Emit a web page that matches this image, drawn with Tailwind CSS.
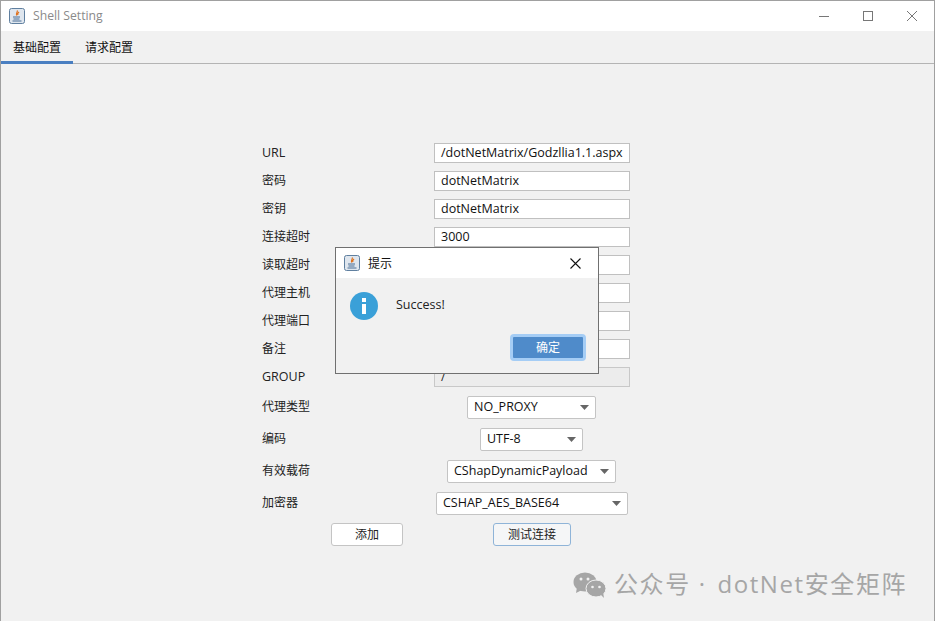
<!DOCTYPE html>
<html><head><meta charset="utf-8"><script src="https://cdn.jsdelivr.net/npm/@tailwindcss/browser@4"></script></head>
<body class="m-0">
<div class="relative w-[935px] h-[621px] overflow-hidden bg-[#f1f1f1] border border-[#a0a0a0] border-b-0 text-[12px] text-[#111] font-['Open_Sans','Noto_Sans_CJK_SC',sans-serif]">
  <!-- title bar -->
  <div class="h-[30px] bg-white flex items-center">
    <svg class="ml-[8px] w-[16px] h-[16px]" viewBox="0 0 16 16"><rect x=".5" y=".5" width="15" height="15" rx="2" fill="#dfe6ee" stroke="#5f7f9f"/><path d="M8 2.5c1.5 1.5-2 3 0 5M10 4c-1 1-2 1.500-1 3" stroke="#e0701a" fill="none" stroke-width="1.200"/><path d="M4 9h7M4.500 11h6M3.500 13h9" stroke="#4a6f96" stroke-width="1"/></svg>
    <span class="ml-[8px] mt-[1px] text-[#8a8a8a] text-[12.2px]">Shell Setting</span>
    <div class="ml-auto flex items-center">
      <svg class="w-[44px] h-[30px]" viewBox="0 0 44 30"><path d="M17 15.500h10" stroke="#777" stroke-width="1"/></svg>
      <svg class="w-[44px] h-[30px]" viewBox="0 0 44 30"><rect x="17.500" y="10.500" width="9" height="9" fill="none" stroke="#777"/></svg>
      <svg class="w-[44px] h-[30px]" viewBox="0 0 44 30"><path d="M17 10l10 10M27 10L17 20" stroke="#777" stroke-width="1"/></svg>
    </div>
  </div>
  <!-- tabs -->
  <div class="h-[33px] flex border-b border-[#b4b4b4] text-[12px] relative">
    <div class="w-[72px] h-[33px] pt-[8px] text-center border-b-[3px] border-[#4a7fc1] text-[#111]">基础配置</div>
    <div class="w-[72px] h-[32px] pt-[8px] text-center text-[#111]">请求配置</div>
  </div>
  <!-- form -->
  <div class="pt-[75px] pl-[261px] text-[#222]">
    <div class="h-[28px] flex items-center"><span class="w-[172px] text-[12.5px]">URL</span><div class="w-[196px] h-[20px] bg-white border border-[#c0c0c0] px-[6px] leading-[18px] whitespace-nowrap text-[12.5px] text-[#111]">/dotNetMatrix/Godzllia1.1.aspx</div></div>
    <div class="h-[28px] flex items-center"><span class="w-[172px]">密码</span><div class="w-[196px] h-[20px] bg-white border border-[#c0c0c0] px-[6px] leading-[18px] text-[12.5px] text-[#111]">dotNetMatrix</div></div>
    <div class="h-[28px] flex items-center"><span class="w-[172px]">密钥</span><div class="w-[196px] h-[20px] bg-white border border-[#c0c0c0] px-[6px] leading-[18px] text-[12.5px] text-[#111]">dotNetMatrix</div></div>
    <div class="h-[28px] flex items-center"><span class="w-[172px]">连接超时</span><div class="w-[196px] h-[20px] bg-white border border-[#c0c0c0] px-[6px] leading-[18px] text-[12.5px] text-[#111]">3000</div></div>
    <div class="h-[28px] flex items-center"><span class="w-[172px]">读取超时</span><div class="w-[196px] h-[20px] bg-white border border-[#c0c0c0]"></div></div>
    <div class="h-[28px] flex items-center"><span class="w-[172px]">代理主机</span><div class="w-[196px] h-[20px] bg-white border border-[#c0c0c0]"></div></div>
    <div class="h-[28px] flex items-center"><span class="w-[172px]">代理端口</span><div class="w-[196px] h-[20px] bg-white border border-[#c0c0c0]"></div></div>
    <div class="h-[28px] flex items-center"><span class="w-[172px]">备注</span><div class="w-[196px] h-[20px] bg-white border border-[#c0c0c0]"></div></div>
    <div class="h-[28px] flex items-center"><span class="w-[172px] text-[12.5px]">GROUP</span><div class="w-[196px] h-[20px] bg-[#ececec] border border-[#c8c8c8] px-[6px] leading-[18px]">/</div></div>
    <div class="h-[32px] flex items-center"><span class="w-[172px]">代理类型</span><div class="w-[195px] flex justify-center"><div class="w-[129px] h-[23px] bg-white border border-[#c4c4c4] rounded-[2px] pl-[6px] pr-[6px] flex items-center justify-between text-[12.5px] text-[#111]"><span>NO_PROXY</span><svg class="w-[9px] h-[5px]" viewBox="0 0 9 5"><path d="M0 0h9L4.500 5z" fill="#666"/></svg></div></div></div>
    <div class="h-[32px] flex items-center"><span class="w-[172px]">编码</span><div class="w-[195px] flex justify-center"><div class="w-[103px] h-[23px] bg-white border border-[#c4c4c4] rounded-[2px] pl-[6px] pr-[6px] flex items-center justify-between text-[12.5px] text-[#111]"><span>UTF-8</span><svg class="w-[9px] h-[5px]" viewBox="0 0 9 5"><path d="M0 0h9L4.500 5z" fill="#666"/></svg></div></div></div>
    <div class="h-[32px] flex items-center"><span class="w-[172px]">有效载荷</span><div class="w-[195px] flex justify-center"><div class="w-[169px] h-[23px] bg-white border border-[#c4c4c4] rounded-[2px] pl-[6px] pr-[6px] flex items-center justify-between text-[12.5px] text-[#111]"><span>CShapDynamicPayload</span><svg class="w-[9px] h-[5px]" viewBox="0 0 9 5"><path d="M0 0h9L4.500 5z" fill="#666"/></svg></div></div></div>
    <div class="h-[32px] flex items-center"><span class="w-[172px]">加密器</span><div class="w-[196px] flex justify-center"><div class="w-[192px] h-[23px] bg-white border border-[#c4c4c4] rounded-[2px] pl-[6px] pr-[6px] flex items-center justify-between text-[12.5px] text-[#111]"><span>CSHAP_AES_BASE64</span><svg class="w-[9px] h-[5px]" viewBox="0 0 9 5"><path d="M0 0h9L4.500 5z" fill="#666"/></svg></div></div></div>
    <div class="mt-[4px] flex">
      <div class="ml-[69px] w-[72px] h-[23px] bg-white border border-[#c4c4c4] rounded-[3px] flex items-center justify-center">添加</div>
      <div class="ml-[90px] w-[78px] h-[23px] bg-[#f5f6f7] border border-[#8fb4d8] rounded-[3px] flex items-center justify-center">测试连接</div>
    </div>
  </div>
  <!-- dialog -->
  <div class="absolute left-[334px] top-[246px] w-[264px] h-[127px] bg-[#f1f1f1] border border-[#707070]">
    <div class="h-[30px] bg-white flex items-center">
      <svg class="ml-[8px] w-[16px] h-[16px]" viewBox="0 0 16 16"><rect x=".5" y=".5" width="15" height="15" rx="2" fill="#dfe6ee" stroke="#5f7f9f"/><path d="M8 2.5c1.5 1.5-2 3 0 5M10 4c-1 1-2 1.500-1 3" stroke="#e0701a" fill="none" stroke-width="1.200"/><path d="M4 9h7M4.500 11h6M3.500 13h9" stroke="#4a6f96" stroke-width="1"/></svg>
      <span class="ml-[8px] mt-[1px] text-[#111]">提示</span>
      <svg class="ml-auto mr-[17px] w-[11px] h-[11px]" viewBox="0 0 11 11"><path d="M.5.5l10 10M10.500.5l-10 10" stroke="#111" stroke-width="1.100"/></svg>
    </div>
    <div class="flex pl-[14px] pt-[14px] h-[56px]">
      <svg class="w-[28px] h-[28px]" viewBox="0 0 28 28"><circle cx="14" cy="14" r="14" fill="#3aa0d8"/><rect x="12" y="6" width="4" height="4" fill="#fff"/><rect x="12" y="12" width="4" height="10" fill="#fff"/></svg>
      <span class="ml-[18px] mt-[4px] text-[#222] text-[12.5px]">Success!</span>
    </div>
    <div class="flex justify-end pr-[12px]">
      <div class="w-[76px] h-[27px] rounded-[4px] bg-[#4f8bca] border-[3px] border-[#a5cdf5] text-white flex items-center justify-center">确定</div>
    </div>
  </div>
  <!-- watermark -->
  <div class="absolute left-[571px] top-[568px] flex items-center text-[#a6a6a6] text-[24px] leading-[30px] whitespace-nowrap">
    <svg class="w-[36px] h-[30px]" viewBox="0 0 36 30"><ellipse cx="13" cy="13" rx="11.500" ry="9.500" fill="#a6a6a6"/><path d="M5 18l-1 6 6-3z" fill="#a6a6a6"/><ellipse cx="24" cy="19.500" rx="10" ry="8.500" fill="#a6a6a6" stroke="#f1f1f1" stroke-width="1"/><path d="M29 26l3 3-1-6z" fill="#a6a6a6"/><circle cx="9" cy="10" r="1.500" fill="#f1f1f1"/><circle cx="16" cy="10" r="1.500" fill="#f1f1f1"/><circle cx="20.500" cy="18" r="1.300" fill="#f1f1f1"/><circle cx="27.500" cy="18" r="1.300" fill="#f1f1f1"/></svg>
    <span class="ml-[6px] tracking-[1.6px]">公众号 · <span class="ml-[3px]">dotNet安全矩阵</span></span>
  </div>
</div>
</body></html>
